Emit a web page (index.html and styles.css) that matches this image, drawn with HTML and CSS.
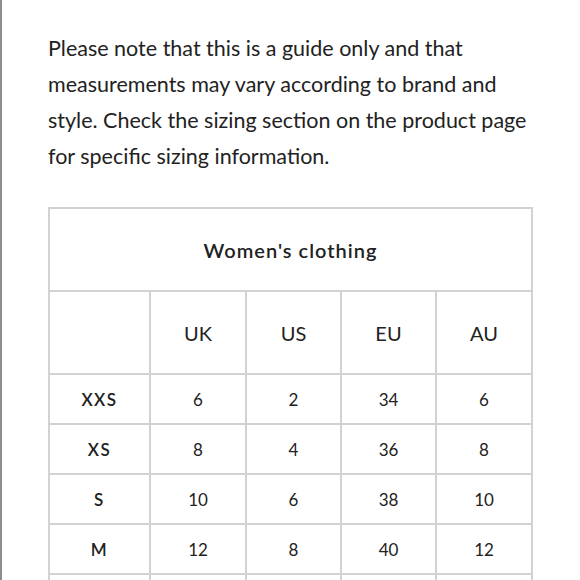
FILE: index.html
```html
<!DOCTYPE html>
<html>
<head>
<meta charset="utf-8">
<link rel="stylesheet" href="styles.css">
</head>
<body>
<div class="page">
  <p class="note">Please note that this is a guide only and that<br>measurements may vary according to brand and<br>style. Check the sizing section on the product page<br>for specific sizing information.</p>
  <table class="sizes">
    <colgroup>
      <col class="c1"><col class="c2"><col class="c3"><col class="c4"><col class="c5">
    </colgroup>
    <tr class="title-row"><th colspan="5" class="title">Women's clothing</th></tr>
    <tr class="head-row"><td></td><td>UK</td><td>US</td><td>EU</td><td>AU</td></tr>
    <tr class="row"><td class="lbl">XXS</td><td>6</td><td>2</td><td>34</td><td>6</td></tr>
    <tr class="row"><td class="lbl">XS</td><td>8</td><td>4</td><td>36</td><td>8</td></tr>
    <tr class="row"><td class="lbl">S</td><td>10</td><td>6</td><td>38</td><td>10</td></tr>
    <tr class="row"><td class="lbl">M</td><td>12</td><td>8</td><td>40</td><td>12</td></tr>
    <tr class="row"><td class="lbl"></td><td></td><td></td><td></td><td></td></tr>
  </table>
</div>
</body>
</html>
```

FILE: styles.css
```css
html, body {
  margin: 0;
  padding: 0;
  background: #fff;
}
body {
  font-family: Lato, "Open Sans", sans-serif;
  color: #222;
  overflow: hidden;
}
.page {
  height: 580px;
  border-left: 2px solid #8c8c8c;
  padding: 30px 0 0 46px;
  box-sizing: border-box;
}
.note {
  margin: 0;
  font-size: 21.5px;
  line-height: 36px;
  white-space: nowrap;
}
.sizes {
  margin-top: 33px;
  border-collapse: collapse;
  width: 485px;
  table-layout: fixed;
}
.c1 { width: 101px; }
.c2 { width: 96px; }
.c3 { width: 95px; }
.c4 { width: 95px; }
.c5 { width: 96px; }
.sizes th, .sizes td {
  border: 2px solid #d2d2d2;
  text-align: center;
  padding: 0;
  color: #222;
}
.title-row th { height: 81px; }
.title {
  font-size: 20px;
  font-weight: 600;
  letter-spacing: 1px;
  color: #333;
}
.head-row td {
  height: 81px;
  font-size: 20px;
}
.row td {
  height: 48px;
  font-size: 17px;
}
.row td.lbl {
  font-weight: 600;
  letter-spacing: 1.5px;
}
```
